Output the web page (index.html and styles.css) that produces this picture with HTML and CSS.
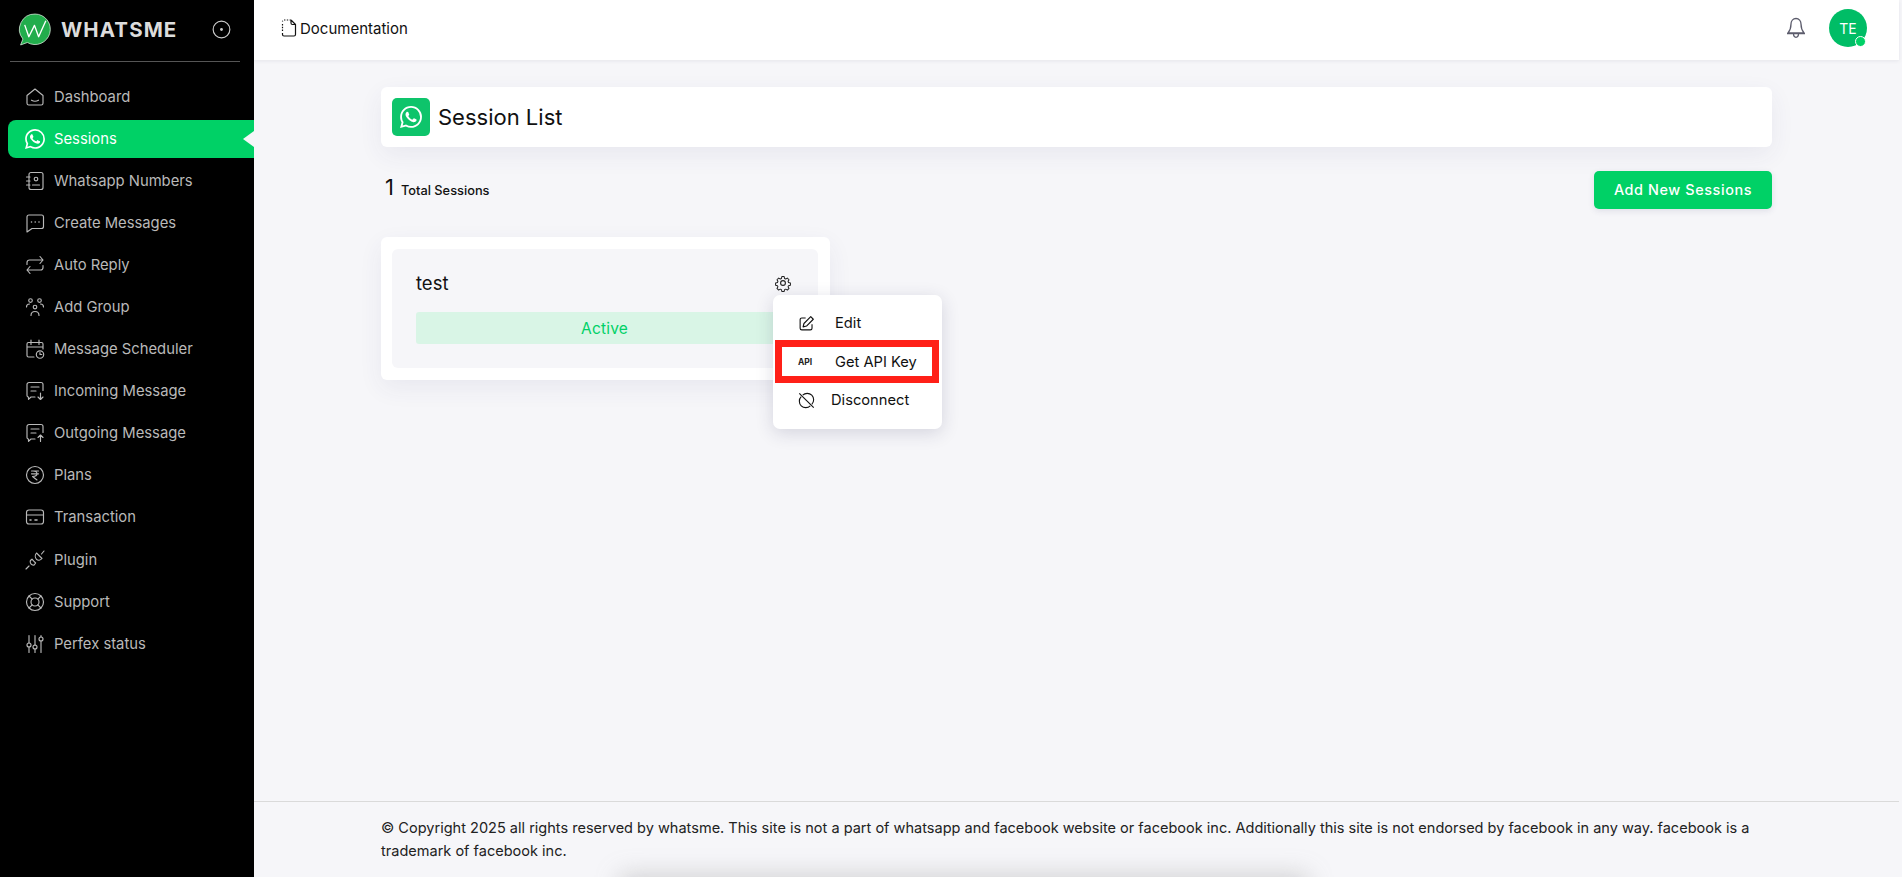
FILE: index.html
```html
<!DOCTYPE html>
<html lang="en">
<head>
<meta charset="utf-8">
<title>Session List</title>
<link rel="stylesheet" href="styles.css">
</head>
<body>
<svg class="defs" aria-hidden="true"><defs><symbol id="wa" viewBox="0 0 24 24"><path fill="currentColor" d="M17.472 14.382c-.297-.149-1.758-.867-2.03-.967-.273-.099-.471-.148-.67.15-.197.297-.767.966-.94 1.164-.173.199-.347.223-.644.075-.297-.15-1.255-.463-2.39-1.475-.883-.788-1.48-1.761-1.653-2.059-.173-.297-.018-.458.13-.606.134-.133.298-.347.446-.52.149-.174.198-.298.298-.497.099-.198.05-.371-.025-.52-.075-.149-.669-1.612-.916-2.207-.242-.579-.487-.5-.669-.51-.173-.008-.371-.01-.57-.01-.198 0-.52.074-.792.372-.272.297-1.04 1.016-1.04 2.479 0 1.462 1.065 2.875 1.213 3.074.149.198 2.096 3.2 5.077 4.487.709.306 1.262.489 1.694.625.712.227 1.36.195 1.871.118.571-.085 1.758-.719 2.006-1.413.248-.694.248-1.289.173-1.413-.074-.124-.272-.198-.57-.347m-5.421 7.403h-.004a9.87 9.87 0 01-5.031-1.378l-.361-.214-3.741.982.998-3.648-.235-.374a9.86 9.86 0 01-1.51-5.26c.001-5.45 4.436-9.884 9.888-9.884 2.64 0 5.122 1.03 6.988 2.898a9.825 9.825 0 012.893 6.994c-.003 5.45-4.437 9.884-9.885 9.884m8.413-18.297A11.815 11.815 0 0012.05 0C5.495 0 .16 5.335.157 11.892c0 2.096.547 4.142 1.588 5.945L.057 24l6.305-1.654a11.882 11.882 0 005.683 1.448h.005c6.554 0 11.89-5.335 11.893-11.893a11.821 11.821 0 00-3.48-8.413z"/></symbol></defs></svg>
<div class="app">
  <aside class="sidebar">
    <div class="brand">
      <svg class="logo" viewBox="0 0 32 32"><path fill="#22ad4c" d="M16.500 1a14.800 14.800 0 1 1-7.400 27.600L2.500 31l2.300-5.800A14.800 14.800 0 0 1 16.500 1z" stroke="#e8f5e9" stroke-width=".7"/><path fill="none" stroke="#fff" stroke-width="1.300" stroke-linejoin="round" d="M6.500 11.500l4 11.500 5.500-11 4 11 7-15.500"/></svg>
      <span class="brand-name">WHATSME</span>
      <svg class="target" viewBox="0 0 20 20"><circle cx="10" cy="10" r="8.800"/><circle class="dot" cx="10" cy="10" r="1.500"/></svg>
    </div>
    <nav class="nav">
      <a class="nav-item"><svg class="ico" viewBox="0 0 20 20"><path d="M2 8.500 10 2l8 6.500v7.700a1.800 1.800 0 0 1-1.800 1.800H3.800A1.800 1.800 0 0 1 2 16.200z"/><path d="M6.500 13.200c2 1.200 5 1.200 7 0"/></svg>Dashboard</a>
      <a class="nav-item active"><svg class="ico-wa"><use href="#wa"/></svg>Sessions</a>
      <a class="nav-item"><svg class="ico" viewBox="0 0 20 20"><rect x="4" y="1.500" width="14" height="17" rx="2"/><circle cx="11" cy="8" r="1.800"/><path d="M7.500 14h7M1.500 6h3.500M1.500 10h3.500M1.500 14h3.500"/></svg>Whatsapp Numbers</a>
      <a class="nav-item"><svg class="ico" viewBox="0 0 20 20"><path d="M4 2h12.500a2 2 0 0 1 2 2v9.500a2 2 0 0 1-2 2H7L2 19V4a2 2 0 0 1 2-2z"/><path class="thick" d="M6.500 9h.01M10.200 9h.01M14 9h.01"/></svg>Create Messages</a>
      <a class="nav-item"><svg class="ico" viewBox="0 0 20 20"><path d="M2 9.500V7.500A2.500 2.500 0 0 1 4.500 5H18M15 1.500 18 5l-3 3.500M18 10.500v2a2.500 2.500 0 0 1-2.500 2.500H2m3-3.500L2 15l3 3.500"/></svg>Auto Reply</a>
      <a class="nav-item"><svg class="ico" viewBox="0 0 20 20"><circle cx="5.500" cy="3.500" r="1.800"/><circle cx="14.500" cy="3.500" r="1.800"/><circle cx="10" cy="10" r="1.800"/><path d="M1.500 10c0-2 1.500-3 3-3M18.500 10c0-2-1.500-3-3-3M6 18.500c0-2.500 1.800-4 4-4s4 1.500 4 4"/></svg>Add Group</a>
      <a class="nav-item"><svg class="ico" viewBox="0 0 20 20"><path d="M9 18H3.500A1.500 1.500 0 0 1 2 16.500V5a1.500 1.500 0 0 1 1.500-1.500h13A1.500 1.500 0 0 1 18 5v5M2 8h16M6 1v4.500M14 1v4.500"/><circle cx="15" cy="15.500" r="3.700"/><path d="M15 13.500v2h1.800"/></svg>Message Scheduler</a>
      <a class="nav-item"><svg class="ico" viewBox="0 0 20 20"><path d="M10 16H6l-2.500 2.300V16A1.500 1.500 0 0 1 2 14.500V3.500A2 2 0 0 1 4 1.500h12A2 2 0 0 1 18 3.500v6"/><path d="M6 6h8M6 10h5M15.500 12v6.500m-2.500-2.500 2.500 2.500L18 16"/></svg>Incoming Message</a>
      <a class="nav-item"><svg class="ico" viewBox="0 0 20 20"><path d="M10 16H6l-2.500 2.300V16A1.500 1.500 0 0 1 2 14.500V3.500A2 2 0 0 1 4 1.500h12A2 2 0 0 1 18 3.500v6"/><path d="M6 6h8M6 10h5M15.500 18.500V12M13 14.500l2.500-2.500 2.500 2.500"/></svg>Outgoing Message</a>
      <a class="nav-item"><svg class="ico" viewBox="0 0 20 20"><circle cx="10" cy="10" r="8.500"/><path d="M6.500 6h7M6.500 8.800h7M8 6c3 0 4 1 4 2.800s-1.500 2.700-4.500 2.700l4.500 3.500"/></svg>Plans</a>
      <a class="nav-item"><svg class="ico" viewBox="0 0 20 20"><rect x="1.500" y="3" width="17" height="14" rx="2.500"/><path d="M1.500 8h17"/><path class="thick" d="M5 13h1M10 13h2"/></svg>Transaction</a>
      <a class="nav-item plugin"><svg class="ico" viewBox="0 0 20 20"><path d="M1 19l3-3M19 1l-2.500 3"/><path d="M11.500 3l5.500 5.500c-1.700 2-4 2.300-5.500.8S9.800 5 11.500 3z"/><path d="M8.800 11.200 7 9.200 5.400 10.500a3.300 3.300 0 0 0 3.800 4.500l1.400-2z"/></svg>Plugin</a>
      <a class="nav-item"><svg class="ico" viewBox="0 0 20 20"><circle cx="10" cy="10" r="8.500"/><circle cx="10" cy="10" r="4"/><path d="M4 4 7.200 7.200M16 4l-3.200 3.200M4 16l3.200-3.200M16 16l-3.200-3.200"/></svg>Support</a>
      <a class="nav-item"><svg class="ico" viewBox="0 0 20 20"><path d="M4 1.500v7.500M4 13v5.500M10 1.500v10M10 15v3.500M16 1.500v1.500M16 7v11.500"/><circle cx="4" cy="11" r="2"/><circle cx="10" cy="13" r="2"/><circle cx="16" cy="5" r="2"/></svg>Perfex status</a>
    </nav>
  </aside>
  <div class="main">
    <header class="topbar">
      <a class="doc-link"><svg class="doc-ico" viewBox="0 0 16 18"><path d="M10 1H3a1.500 1.500 0 0 0-1.500 1.500M1.500 5v8" stroke-dasharray="1.400 1.400"/><path d="M10 1l4.500 4.500v10A1.500 1.500 0 0 1 13 17H3a1.500 1.500 0 0 1-1.500-1.500V14M10 1v3a1.500 1.500 0 0 0 1.500 1.500h3"/></svg>Documentation</a>
      <div class="top-right">
        <svg class="bell" viewBox="0 0 20 22"><path d="M10 1.500c-3 0-5 2.500-5 5.500 0 4-1 6.500-3 9h16c-2-2.500-3-5-3-9 0-3-2-5.500-5-5.500zM1 16.500h18M7.500 16.500c0 5 5 5 5 0"/></svg>
        <div class="avatar">TE<span class="online"></span></div>
      </div>
    </header>
    <main class="content">
      <section class="title-card">
        <span class="title-ico"><svg class="title-wa"><use href="#wa"/></svg></span>
        <h1 class="title">Session List</h1>
      </section>
      <div class="summary">
        <div class="total"><span class="count">1</span><span class="count-label">Total Sessions</span></div>
        <a class="add-btn">Add New Sessions</a>
      </div>
      <section class="session-card">
        <div class="session-inner">
          <div class="session-head">
            <span class="session-name">test</span>
            <svg class="gear" viewBox="0 0 24 24"><path d="M10.300 2.500h3.400l.6 2.800 1.700.8 2.500-1.400 2.400 2.500-1.400 2.400.7 1.700 2.800.7v3.300l-2.800.7-.7 1.700 1.400 2.400-2.400 2.400-2.500-1.400-1.700.7-.6 2.800h-3.400l-.6-2.800-1.700-.7-2.500 1.400-2.400-2.400 1.400-2.400-.7-1.700-2.800-.7v-3.300l2.800-.7.700-1.700-1.400-2.400 2.400-2.500 2.500 1.400 1.700-.8z" transform="translate(1.200 1.200) scale(.9)"/><circle cx="12" cy="12" r="3.200"/></svg>
          </div>
          <div class="status">Active</div>
        </div>
        <div class="menu">
          <a class="menu-item"><svg class="menu-ico" viewBox="0 0 20 20"><path d="M9 3.500H4.500a2 2 0 0 0-2 2v10a2 2 0 0 0 2 2h10a2 2 0 0 0 2-2V11"/><path d="M15 2l3 3-8 8-4 1 1-4z"/></svg><span class="menu-label">Edit</span></a>
          <a class="menu-item highlighted"><span class="api">API</span><span class="menu-label">Get API Key</span></a>
          <a class="menu-item disconnect"><svg class="menu-ico" viewBox="0 0 20 20"><path d="M5.500 3.800A7.500 7.500 0 0 1 16.200 14.500M14.500 16.200A7.500 7.500 0 0 1 3.800 5.500"/><path d="M1.500 1.500l17 17"/></svg><span class="menu-label">Disconnect</span></a>
        </div>
      </section>
    </main>
    <footer class="footer">© Copyright 2025 all rights reserved by whatsme. This site is not a part of whatsapp and facebook website or facebook inc. Additionally this site is not endorsed by facebook in any way. facebook is a trademark of facebook inc.<span class="blur"></span></footer>
  </div>
</div>
</body>
</html>
```
FILE: styles.css
```css
* { box-sizing: border-box; }
html, body { margin: 0; height: 100%; overflow: hidden; }
body { font-family: "Inter", "Liberation Sans", sans-serif; color: #111; background: #f6f6f9; }
.defs { display: none; }
.app { display: flex; height: 877px; }

.sidebar { width: 254px; flex: none; background: #000; padding: 0 8px; }
.brand { height: 62px; margin: 0 2px 0 2px; padding: 0 0 2px 8px; display: flex; align-items: center; border-bottom: 1px solid #555; width: 230px; }
.logo { width: 33px; height: 33px; flex: none; }
.brand-name { margin-left: 10px; font-size: 20.500px; font-weight: 700; letter-spacing: 1.100px; color: #dcdcdc; }
.target { width: 19px; height: 19px; margin-left: 35px; fill: none; stroke: #ccc; stroke-width: 1.200; }
.target .dot { fill: #ccc; stroke: none; }

.nav { display: flex; flex-direction: column; gap: 4px; margin-top: 16px; }
.nav-item { position: relative; height: 38px; display: flex; align-items: center; padding: 0 0 1px 17px; font-size: 14.800px; color: #b9b9b9; }
.nav-item.active { width: 246px; background: #00d166; color: #fff; border-radius: 8px 0 0 8px; }
.nav-item.active::after { content: ""; position: absolute; right: 0; top: 11px; border: 8px solid transparent; border-left: 0; border-right: 11px solid #f6f6f9; }
.nav-item.plugin { margin-top: 1px; }
.ico { width: 20px; height: 20px; margin-right: 9px; flex: none; fill: none; stroke: #b9b9b9; stroke-width: 1.150; stroke-linecap: round; stroke-linejoin: round; }
.ico .thick { stroke-width: 1.600; }
.ico-wa { width: 20px; height: 20px; margin-right: 9px; flex: none; color: #fff; }

.main { flex: 1; min-width: 0; display: flex; flex-direction: column; margin-right: 3px; }
.topbar { height: 60px; flex: none; background: #fff; box-shadow: 0 1px 4px rgba(30, 30, 60, .08); display: flex; align-items: center; justify-content: space-between; padding: 0 32px 4px 27px; }
.doc-link { display: flex; align-items: center; gap: 3px; font-size: 15px; color: #111; }
.doc-ico { width: 16px; height: 18px; fill: none; stroke: #111; stroke-width: 1.200; stroke-linejoin: round; }
.top-right { display: flex; align-items: center; gap: 23px; }
.bell { width: 20px; height: 22px; fill: none; stroke: #5c5c6c; stroke-width: 1.300; stroke-linejoin: round; }
.avatar { position: relative; width: 38px; height: 38px; border-radius: 50%; background: #00bd66; color: #fff; font-size: 14px; display: flex; align-items: center; justify-content: center; }
.online { position: absolute; right: 1px; bottom: 0; width: 11px; height: 11px; border-radius: 50%; background: #00d166; border: 1.500px solid #fff; }

.content { flex: 1; padding: 27px 127px 0 127px; }
.title-card { height: 60px; background: #fff; border-radius: 6px; box-shadow: 0 8px 24px rgba(60, 60, 110, .07); display: flex; align-items: center; padding-left: 11px; gap: 8px; }
.title-ico { width: 38px; height: 38px; border-radius: 5px; background: #0ec46b; display: flex; align-items: center; justify-content: center; }
.title-wa { width: 22px; height: 22px; color: #fff; }
.title { margin: 0; font-size: 22px; font-weight: 400; color: #111; }
.summary { display: flex; align-items: center; justify-content: space-between; margin-top: 24px; }
.total { display: flex; align-items: baseline; gap: 7px; padding: 0 0 7px 4px; }
.count { font-size: 22px; }
.count-label { font-size: 12.800px; font-weight: 500; }
.add-btn { width: 178px; height: 38px; border-radius: 5px; background: #00d166; color: #fff; font-size: 14.400px; font-weight: 500; letter-spacing: .6px; padding-bottom: 1px; display: flex; align-items: center; justify-content: center; box-shadow: 0 2px 6px rgba(60, 60, 110, .12); }

.session-card { position: relative; width: 449px; height: 143px; margin-top: 28px; padding: 12px 12px 12px 11px; background: #fff; border-radius: 6px; box-shadow: 0 8px 24px rgba(60, 60, 110, .07); }
.session-inner { height: 119px; background: #f6f6f9; border-radius: 6px; padding: 22px 26px 0 24px; }
.session-head { display: flex; align-items: center; justify-content: space-between; height: 24px; }
.session-name { font-size: 18.500px; color: #111; }
.gear { width: 18px; height: 18px; fill: none; stroke: #222; stroke-width: 1.500; stroke-linejoin: round; }
.status { margin-top: 17px; margin-right: -1px; height: 32px; background: #d9f5e6; color: #00d166; border-radius: 3px; font-size: 15.500px; display: flex; align-items: center; justify-content: center; letter-spacing: .2px; }

.menu { position: absolute; left: 392px; top: 58px; width: 169px; height: 134px; background: #fff; border-radius: 7px; box-shadow: 0 4px 18px rgba(40, 40, 80, .16); padding: 9px 0; }
.menu-item { position: relative; height: 38px; display: flex; align-items: center; padding-left: 25px; font-size: 14.700px; color: #111; }
.menu-ico { width: 17px; height: 17px; flex: none; fill: none; stroke: #111; stroke-width: 1.300; stroke-linejoin: round; }
.menu-label { margin-left: 20px; }
.menu-item.disconnect .menu-label { margin-left: 16px; }
.api { width: 17px; flex: none; font-size: 8.500px; font-weight: 700; color: #222; }
.highlighted { margin: -2px 3px 0 2px; height: 43px; border: 7px solid #ff2018; padding-left: 16px; }
.menu-item.disconnect { margin-top: -2px; }

.footer { position: relative; height: 76px; flex: none; border-top: 1px solid #dadada; padding: 15px 120px 0 127px; font-size: 14.540px; line-height: 23px; color: #222; overflow: hidden; }
.blur { position: absolute; left: 380px; bottom: -22px; width: 660px; height: 10px; background: rgba(160, 160, 160, .4); box-shadow: 0 0 24px 14px rgba(150, 150, 150, .4); }
```
